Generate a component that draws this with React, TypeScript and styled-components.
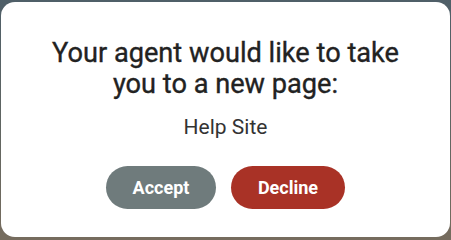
import React from 'react'
import styled, { createGlobalStyle } from 'styled-components'

const GlobalStyle = createGlobalStyle`
  html, body {
    margin: 0;
    padding: 0;
  }
  body {
    font-family: Roboto, "Liberation Sans", Arial, sans-serif;
  }
`

const Backdrop = styled.div`
  width: 451px;
  height: 240px;
  box-sizing: border-box;
  padding: 2px 1px 3px 1px;
  background: linear-gradient(180deg, #4f5f68 0%, #5f6562 50%, #766c5e 100%);
  display: flex;
`

const Card = styled.div`
  flex: 1;
  background: #ffffff;
  border-radius: 14px;
  display: flex;
  flex-direction: column;
  align-items: center;
  padding-top: 36px;
  box-sizing: border-box;
`

const Title = styled.h2`
  margin: 0;
  font-size: 27.2px;
  font-weight: 400;
  -webkit-text-stroke: 0.35px #222222;
  line-height: 31px;
  color: #222222;
  text-align: center;
  width: 360px;
`

const PageName = styled.p`
  margin: 14px 0 0;
  font-size: 21px;
  line-height: 26px;
  color: #333333;
`

const Actions = styled.div`
  display: flex;
  gap: 15px;
  margin-top: 26px;
`

const ActionButton = styled.button<{ $tone: 'neutral' | 'danger' }>`
  border: none;
  border-radius: 22px;
  height: 43px;
  padding: 0;
  width: ${p => (p.$tone === 'danger' ? '114px' : '110px')};
  background: ${p => (p.$tone === 'danger' ? '#a93226' : '#6f7b7c')};
  color: #ffffff;
  font-family: Roboto, "Liberation Sans", Arial, sans-serif;
  font-size: 18px;
  font-weight: 700;
  cursor: pointer;
`

export default function App() {
  return (
    <>
      <GlobalStyle />
      <Backdrop>
        <Card>
          <Title>Your agent would like to take you to a new page:</Title>
          <PageName>Help Site</PageName>
          <Actions>
            <ActionButton $tone="neutral">Accept</ActionButton>
            <ActionButton $tone="danger">Decline</ActionButton>
          </Actions>
        </Card>
      </Backdrop>
    </>
  )
}
